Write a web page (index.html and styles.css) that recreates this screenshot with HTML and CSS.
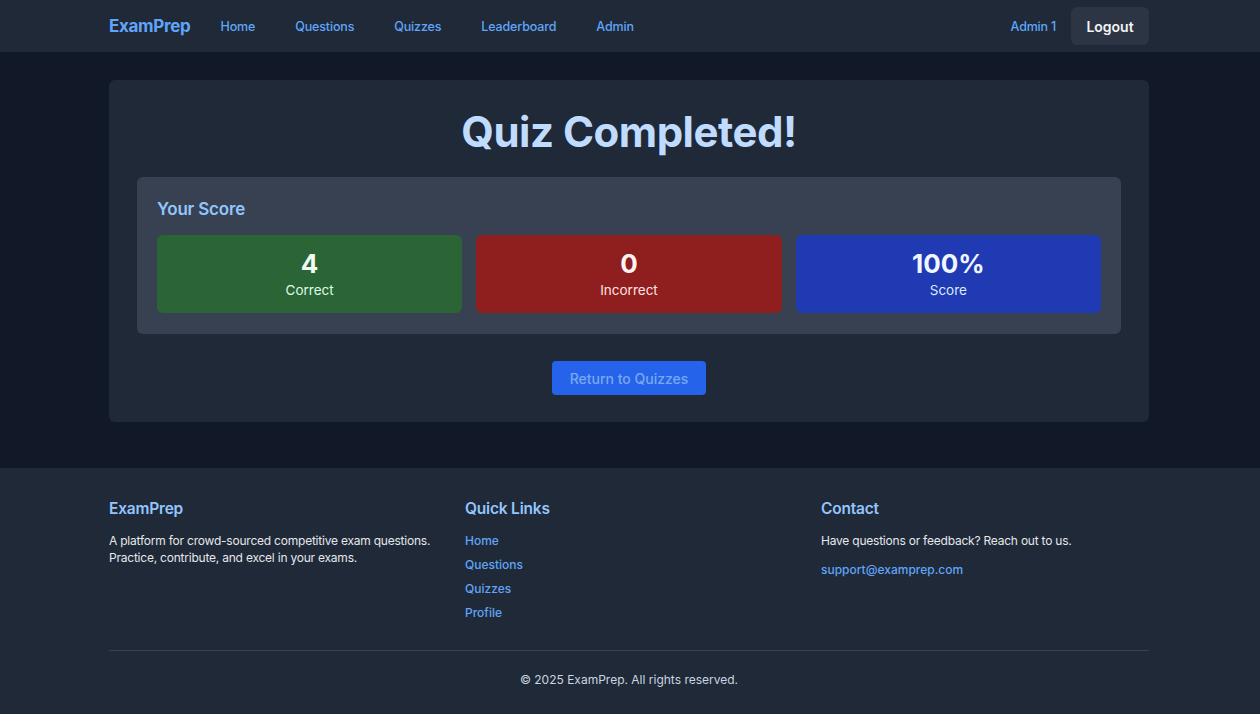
FILE: index.html
```html
<!DOCTYPE html>
<html lang="en">
<head>
<meta charset="utf-8">
<title>ExamPrep - Quiz Completed</title>
<link rel="stylesheet" href="styles.css">
</head>
<body>
<header class="nav">
  <div class="container nav-inner">
    <div class="nav-left">
      <a class="logo" href="#">ExamPrep</a>
      <nav class="nav-links">
        <a href="#">Home</a>
        <a href="#">Questions</a>
        <a href="#">Quizzes</a>
        <a href="#">Leaderboard</a>
        <a href="#">Admin</a>
      </nav>
    </div>
    <div class="nav-right">
      <a class="user" href="#">Admin 1</a>
      <button class="logout">Logout</button>
    </div>
  </div>
</header>

<main class="main">
  <div class="container">
    <section class="card">
      <h1 class="title">Quiz Completed!</h1>
      <div class="score-box">
        <h2 class="score-title">Your Score</h2>
        <div class="stats">
          <div class="stat stat-green"><div class="num">4</div><div class="label">Correct</div></div>
          <div class="stat stat-red"><div class="num">0</div><div class="label">Incorrect</div></div>
          <div class="stat stat-blue"><div class="num">100%</div><div class="label">Score</div></div>
        </div>
      </div>
      <div class="actions"><a class="btn" href="#">Return to Quizzes</a></div>
    </section>
  </div>
</main>

<footer class="footer">
  <div class="container">
    <div class="footer-cols">
      <div class="fcol">
        <h3>ExamPrep</h3>
        <p>A platform for crowd-sourced competitive exam questions. Practice, contribute, and excel in your exams.</p>
      </div>
      <div class="fcol">
        <h3>Quick Links</h3>
        <ul class="flinks">
          <li><a href="#">Home</a></li>
          <li><a href="#">Questions</a></li>
          <li><a href="#">Quizzes</a></li>
          <li><a href="#">Profile</a></li>
        </ul>
      </div>
      <div class="fcol">
        <h3>Contact</h3>
        <p>Have questions or feedback? Reach out to us.</p>
        <a class="mail" href="#">support@examprep.com</a>
      </div>
    </div>
    <div class="copy">© 2025 ExamPrep. All rights reserved.</div>
  </div>
</footer>
</body>
</html>
```

FILE: styles.css
```css
* { box-sizing: border-box; }
html, body { margin: 0; padding: 0; }
body {
  background: #111827;
  font-family: Inter, "Noto Sans", "Liberation Sans", sans-serif;
  color: #e5e7eb;
  -webkit-font-smoothing: antialiased;
}
a { text-decoration: none; }
.container { width: 1042px; padding-right: 2px; margin: 0 auto; }

.nav { background: #1f2937; height: 52px; }
.nav-inner { height: 52px; display: flex; align-items: center; justify-content: space-between; }
.nav-left { display: flex; align-items: center; }
.logo { color: #60a5fa; font-weight: 700; font-size: 17px; letter-spacing: -0.3px; margin-right: 30px; }
.nav-links { display: flex; gap: 40px; }
.nav-links a { color: #60a5fa; font-size: 12.5px; font-weight: 500; letter-spacing: -0.15px; }
.nav-right { display: flex; align-items: center; gap: 15px; }
.user { color: #60a5fa; font-size: 12.5px; font-weight: 500; letter-spacing: -0.2px; }
.logout {
  background: #2d3544; color: #f3f4f6; border: 0; border-radius: 6px;
  font-family: inherit; font-size: 14px; font-weight: 600;
  width: 78px; height: 38px; padding: 0;
}

.main { padding: 28px 0 46px; }
.card { background: #1f2937; border-radius: 6px; padding: 26px 28px 27px; }
.title {
  margin: 0 0 19px; text-align: center; color: #bfdbfe;
  font-size: 42px; font-weight: 700; line-height: 52px; letter-spacing: -0.5px;
}
.score-box { background: #374151; border-radius: 6px; padding: 20px 20px 21px; }
.score-title { margin: 0 0 14px; color: #93c5fd; font-size: 17px; font-weight: 600; line-height: 24px; letter-spacing: -0.2px; }
.stats { display: grid; grid-template-columns: repeat(3, 1fr); gap: 14px; }
.stat { border-radius: 6px; height: 78px; display: flex; flex-direction: column; align-items: center; justify-content: center; color: #f0fdf4; }
.stat-green { background: #2c6535; }
.stat-red { background: #8f1f1e; color: #fef2f2; }
.stat-blue { background: #1f3ab2; color: #eff6ff; }
.num { font-size: 26px; font-weight: 700; line-height: 30px; }
.stat-green .label { color: #dcfce7; }
.stat-red .label { color: #fee2e2; }
.stat-blue .label { color: #dbeafe; }
.label { font-size: 13.5px; line-height: 20px; margin-top: 1px; }
.actions { display: flex; justify-content: center; margin-top: 27px; }
.btn {
  background: #2563eb; color: #7aa8f0; border-radius: 4px;
  font-size: 14px; font-weight: 500; width: 154px; height: 34px;
  display: flex; align-items: center; justify-content: center;
}

.footer { background: #1f2937; padding: 29px 0 28px; }
.footer-cols { display: grid; grid-template-columns: repeat(3, 1fr); gap: 28px; padding-bottom: 29px; border-bottom: 1px solid #374151; }
.fcol h3 { margin: 0 0 11px; color: #93c5fd; font-size: 15.5px; font-weight: 600; line-height: 24px; letter-spacing: -0.2px; }
.fcol p { margin: 0 0 9px; font-size: 12px; line-height: 17px; color: #e5e7eb; letter-spacing: -0.22px; }
.flinks { list-style: none; margin: 0; padding: 0; display: flex; flex-direction: column; gap: 7px; }
.flinks li { line-height: 17px; font-size: 12px; }
.flinks a, .mail { color: #60a5fa; font-size: 12px; font-weight: 500; line-height: 17px; }
.copy { text-align: center; font-size: 12px; line-height: 15px; color: #cbd5e1; padding-top: 21px; }
```
